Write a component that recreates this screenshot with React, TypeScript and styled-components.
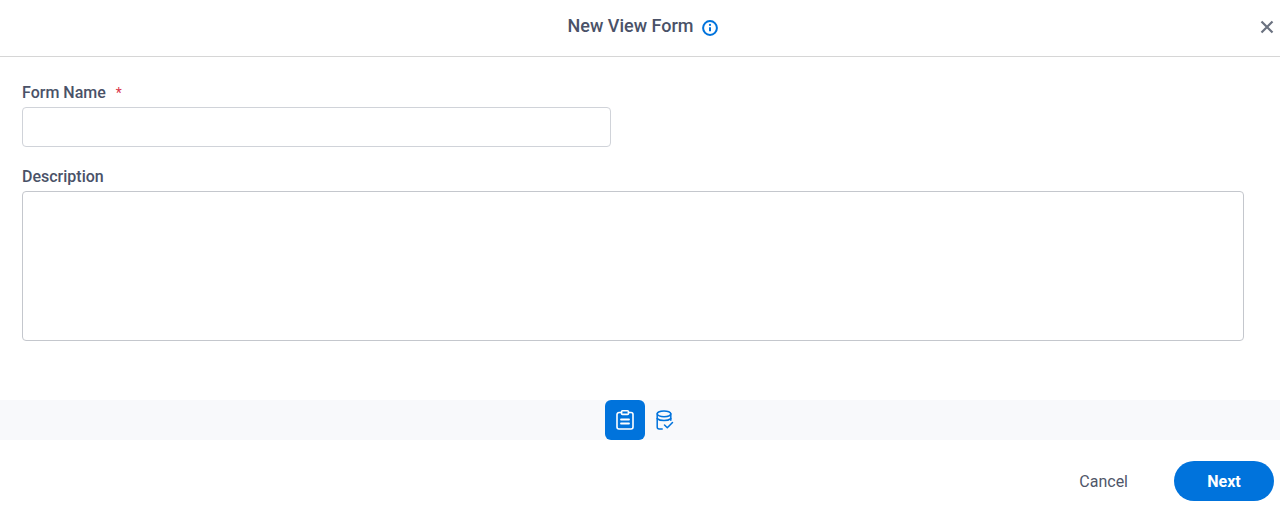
import React from "react";
import styled, { createGlobalStyle } from "styled-components";

const Global = createGlobalStyle`
  html, body {
    margin: 0;
    background: #fff;
    font-family: Roboto, "Liberation Sans", sans-serif;
    color: #4a5268;
  }
`;

const Page = styled.div`
  width: 1280px;
  height: 517px;
  display: flex;
  flex-direction: column;
  overflow: hidden;
`;

const Header = styled.header`
  position: relative;
  height: 56px;
  flex: none;
  border-bottom: 1px solid #d6d6d6;
  display: flex;
  align-items: center;
  justify-content: center;
  gap: 9px;
  padding-left: 6px;
`;

const Title = styled.h1`
  margin: 0 0 5px;
  font-size: 18px;
  font-weight: 500;
  line-height: 24px;
`;

const InfoIcon = styled.svg`
  width: 16px;
  height: 16px;
  color: #0073dc;
`;

const CloseButton = styled.button`
  position: absolute;
  right: 6px;
  top: 20px;
  width: 14px;
  height: 14px;
  padding: 0;
  border: 0;
  background: none;
  color: #6b7280;
  display: block;
`;

const Body = styled.main`
  height: 343px;
  flex: none;
  padding: 26px 36px 0 22px;
  box-sizing: border-box;
  display: flex;
  flex-direction: column;
`;

const Field = styled.div<{ $bottom: number }>`
  display: flex;
  flex-direction: column;
  margin-bottom: ${(p) => p.$bottom}px;
`;

const Label = styled.label`
  font-size: 16px;
  font-weight: 500;
  line-height: 19px;
  height: 24px;
  display: block;
`;

const Required = styled.span`
  color: #d9344a;
  margin-left: 6px;
  font-size: 14px;
  font-weight: 400;
`;

const TextInput = styled.input`
  width: 589px;
  height: 40px;
  box-sizing: border-box;
  border: 1px solid #d0d3d9;
  border-radius: 4px;
  background: #fff;
  outline: none;
`;

const TextArea = styled.textarea`
  width: 100%;
  height: 150px;
  box-sizing: border-box;
  border: 1px solid #c4c7cd;
  border-radius: 4px;
  background: #fff;
  outline: none;
  resize: none;
  display: block;
`;

const StepBar = styled.nav`
  height: 40px;
  flex: none;
  background: #f8f9fb;
  display: flex;
  justify-content: center;
  padding-left: 10px;
`;

const Step = styled.button<{ $active?: boolean }>`
  width: 40px;
  height: 40px;
  padding: 0;
  border: 0;
  border-radius: 6px;
  background: ${(p) => (p.$active ? "#0073dc" : "transparent")};
  color: ${(p) => (p.$active ? "#fff" : "#0073dc")};
  display: flex;
  align-items: center;
  justify-content: center;
`;

const Footer = styled.footer`
  flex: 1;
  display: flex;
  align-items: flex-start;
  justify-content: flex-end;
  padding: 21px 6px 0 0;
`;

const CancelButton = styled.button`
  height: 40px;
  padding: 0;
  margin-right: 46px;
  border: 0;
  background: none;
  color: #4f5669;
  font: 400 16px Roboto, "Liberation Sans", sans-serif;
`;

const NextButton = styled.button`
  width: 100px;
  height: 40px;
  padding: 0;
  border: 0;
  border-radius: 20px;
  background: #0073dc;
  color: #fff;
  font: 700 16px Roboto, "Liberation Sans", sans-serif;
`;

export default function App() {
  return (
    <Page>
      <Global />
      <Header>
        <Title>New View Form</Title>
        <InfoIcon viewBox="0 0 16 16" fill="none" stroke="currentColor">
          <circle cx="8" cy="8" r="6.9" strokeWidth="2" />
          <path d="M8 7.2v4" strokeWidth="2" />
          <circle cx="8" cy="4.9" r="1.1" fill="currentColor" stroke="none" />
        </InfoIcon>
        <CloseButton aria-label="Close">
          <svg width="14" height="14" viewBox="0 0 14 14" stroke="currentColor" strokeWidth="2.2" fill="none">
            <path d="M1.5 1.5l11 11M12.5 1.5l-11 11" />
          </svg>
        </CloseButton>
      </Header>
      <Body>
        <Field $bottom={20}>
          <Label>
            Form Name <Required>*</Required>
          </Label>
          <TextInput />
        </Field>
        <Field $bottom={0}>
          <Label>Description</Label>
          <TextArea />
        </Field>
      </Body>
      <StepBar>
        <Step $active aria-label="Form">
          <svg width="18" height="20" viewBox="0 0 18 20" fill="none" stroke="currentColor" strokeWidth="1.6" strokeLinejoin="round" strokeLinecap="round">
            <path d="M5.5 2.5H3a2 2 0 0 0-2 2V17a2 2 0 0 0 2 2h12a2 2 0 0 0 2-2V4.5a2 2 0 0 0-2-2h-2.5" />
            <rect x="5.5" y="0.8" width="7" height="3.6" rx="1" />
            <path d="M5 9.5h8M5 13.5h8" strokeWidth="1.8" />
          </svg>
        </Step>
        <Step aria-label="Data">
          <svg width="18" height="20" viewBox="0 0 18 20" fill="none" stroke="currentColor" strokeWidth="1.5" strokeLinejoin="round" strokeLinecap="round">
            <ellipse cx="8" cy="3.8" rx="6.8" ry="2.9" />
            <path d="M1.2 3.8V17a2 2 0 0 0 2 2h3" />
            <path d="M14.8 3.8v6.5" />
            <path d="M1.2 8.6c1.5 1.4 4 2 6.8 2 2.7 0 5.2-.6 6.8-2" />
            <path d="M8.5 15l2.8 2.8 5.2-5.3" />
          </svg>
        </Step>
      </StepBar>
      <Footer>
        <CancelButton>Cancel</CancelButton>
        <NextButton>Next</NextButton>
      </Footer>
    </Page>
  );
}
